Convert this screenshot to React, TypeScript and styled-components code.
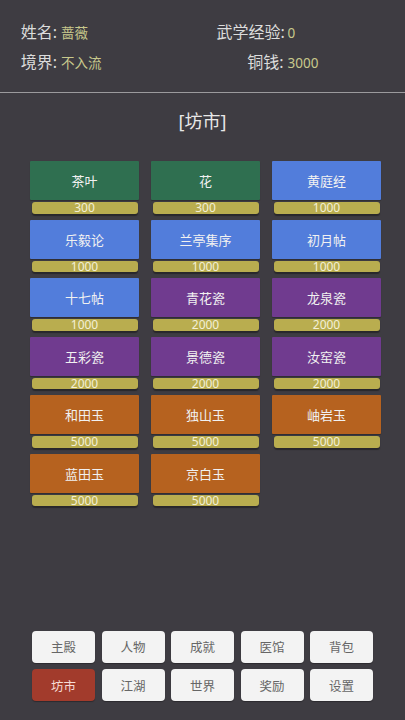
import React from 'react'
import styled, { createGlobalStyle } from 'styled-components'

const GlobalStyle = createGlobalStyle`
  html, body {
    margin: 0;
    padding: 0;
    background: #3e3c42;
  }
  body {
    font-family: 'Noto Sans', 'Noto Sans CJK SC', sans-serif;
  }
`

const Page = styled.div`
  width: 405px;
  height: 720px;
  display: flex;
  flex-direction: column;
  background: #3e3c42;
  overflow: hidden;
`

const Header = styled.div`
  display: grid;
  grid-template-columns: 1fr 1fr;
  padding: 21px 0 0 20px;
  height: 93px;
  box-sizing: border-box;
  border-bottom: 1px solid #9b9a9d;
`

const InfoColumn = styled.div<{ labelWidth: number; shift?: number }>`
  display: grid;
  grid-template-columns: ${({ labelWidth }) => labelWidth}px auto;
  row-gap: 8px;
  align-items: baseline;
  align-content: start;
  margin-left: ${({ shift }) => shift ?? 0}px;
`

const Label = styled.span`
  font-size: 16px;
  line-height: 22px;
  color: #dcdcdc;
  text-align: right;
  white-space: nowrap;
`

const Value = styled.span`
  font-size: 13.5px;
  color: #c8c98c;
  padding-left: 4px;
  white-space: nowrap;
`

const Title = styled.h2`
  margin: 16px 0 0;
  text-align: center;
  font-size: 18px;
  font-weight: 400;
  line-height: 24px;
  color: #e8e8e8;
`

const Grid = styled.div`
  display: grid;
  grid-template-columns: repeat(3, 109px);
  column-gap: 12px;
  row-gap: 6px;
  margin: 28px 0 0 30px;
`

const Item = styled.div`
  display: flex;
  flex-direction: column;
  gap: 2px;
  cursor: pointer;
`

const Goods = styled.div<{ tone: string }>`
  height: 39px;
  display: flex;
  align-items: center;
  justify-content: center;
  background: ${({ tone }) => tone};
  border-radius: 1px;
  font-size: 13px;
  color: #f1f1f1;
  box-shadow: 0 1px 1px rgba(0, 0, 0, 0.25);
`

const Price = styled.div`
  height: 11.5px;
  margin: 0 1.5px;
  display: flex;
  align-items: center;
  justify-content: center;
  background: #b9ad4f;
  border-radius: 3px;
  font-size: 12px;
  color: #f4f0d6;
  box-shadow: 0 1.5px 1px rgba(0, 0, 0, 0.35);
`

const Nav = styled.div`
  margin-top: auto;
  margin-left: 32px;
  margin-bottom: 19px;
  display: grid;
  grid-template-columns: repeat(5, 63px);
  column-gap: 6.5px;
  row-gap: 6.5px;
`

const NavButton = styled.button<{ active?: boolean }>`
  height: 32px;
  padding: 0;
  border: none;
  border-radius: 4px;
  font-family: 'Noto Sans', 'Noto Sans CJK SC', sans-serif;
  font-size: 12.5px;
  background: ${({ active }) => (active ? '#a23b2c' : '#f3f3f3')};
  color: ${({ active }) => (active ? '#f6dcd6' : '#666666')};
  box-shadow: 0 1px 1px rgba(0, 0, 0, 0.3);
  cursor: pointer;
`

const GREEN = '#2f6f50'
const BLUE = '#527ddb'
const PURPLE = '#703b8f'
const ORANGE = '#b6621f'

const goods = [
  { name: '茶叶', price: 300, tone: GREEN },
  { name: '花', price: 300, tone: GREEN },
  { name: '黄庭经', price: 1000, tone: BLUE },
  { name: '乐毅论', price: 1000, tone: BLUE },
  { name: '兰亭集序', price: 1000, tone: BLUE },
  { name: '初月帖', price: 1000, tone: BLUE },
  { name: '十七帖', price: 1000, tone: BLUE },
  { name: '青花瓷', price: 2000, tone: PURPLE },
  { name: '龙泉瓷', price: 2000, tone: PURPLE },
  { name: '五彩瓷', price: 2000, tone: PURPLE },
  { name: '景德瓷', price: 2000, tone: PURPLE },
  { name: '汝窑瓷', price: 2000, tone: PURPLE },
  { name: '和田玉', price: 5000, tone: ORANGE },
  { name: '独山玉', price: 5000, tone: ORANGE },
  { name: '岫岩玉', price: 5000, tone: ORANGE },
  { name: '蓝田玉', price: 5000, tone: ORANGE },
  { name: '京白玉', price: 5000, tone: ORANGE }
]

const tabs = ['主殿', '人物', '成就', '医馆', '背包', '坊市', '江湖', '世界', '奖励', '设置']

export default function App() {
  return (
    <Page>
      <GlobalStyle />
      <Header>
        <InfoColumn labelWidth={37}>
          <Label>姓名:</Label>
          <Value>蔷薇</Value>
          <Label>境界:</Label>
          <Value>不入流</Value>
        </InfoColumn>
        <InfoColumn labelWidth={67} shift={4}>
          <Label>武学经验:</Label>
          <Value>0</Value>
          <Label>铜钱:</Label>
          <Value>3000</Value>
        </InfoColumn>
      </Header>

      <Title>[坊市]</Title>

      <Grid>
        {goods.map(g => (
          <Item key={g.name}>
            <Goods tone={g.tone}>{g.name}</Goods>
            <Price>{g.price}</Price>
          </Item>
        ))}
      </Grid>

      <Nav>
        {tabs.map(t => (
          <NavButton key={t} active={t === '坊市'}>
            {t}
          </NavButton>
        ))}
      </Nav>
    </Page>
  )
}
